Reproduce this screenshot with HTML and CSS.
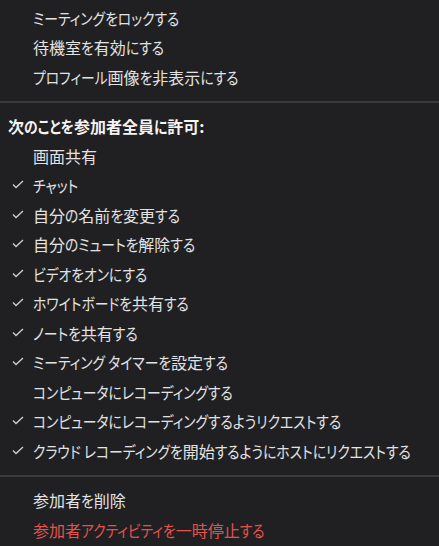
FILE: index.html
```html
<!DOCTYPE html>
<html lang="ja">
<head>
  <meta charset="UTF-8" />
  <title>セキュリティ</title>
  <link rel="stylesheet" href="styles.css">
</head>
<body>
  <div class="menu">
    <div class="group">
      <div class="item"><span class="k">ミーティングをロックする</span></div>
      <div class="item">待機室<span class="k">を</span>有効<span class="k">にする</span></div>
      <div class="item"><span class="k">プロフィール</span>画像<span class="k">を</span>非表示<span class="k">にする</span></div>
    </div>
    <div class="sep"></div>
    <div class="group">
      <div class="heading">次<span class="k">のことを</span>参加者全員<span class="k">に</span>許可:</div>
      <div class="item">画面共有</div>
      <div class="item checked"><span class="k">チャット</span></div>
      <div class="item checked">自分<span class="k">の</span>名前<span class="k">を</span>変更<span class="k">する</span></div>
      <div class="item checked">自分<span class="k">のミュートを</span>解除<span class="k">する</span></div>
      <div class="item checked"><span class="k">ビデオをオンにする</span></div>
      <div class="item checked"><span class="k">ホワイトボードを</span>共有<span class="k">する</span></div>
      <div class="item checked"><span class="k">ノートを</span>共有<span class="k">する</span></div>
      <div class="item checked"><span class="k">ミーティング タイマーを</span>設定<span class="k">する</span></div>
      <div class="item"><span class="k">コンピュータにレコーディングする</span></div>
      <div class="item checked"><span class="k">コンピュータにレコーディングするようリクエストする</span></div>
      <div class="item checked"><span class="k">クラウド レコーディングを</span>開始<span class="k">するようにホストにリクエストする</span></div>
    </div>
    <div class="sep"></div>
    <div class="group">
      <div class="item">参加者<span class="k">を</span>削除</div>
      <div class="item danger">参加者<span class="k">アクティビティを</span>一時停止<span class="k">する</span></div>
    </div>
  </div>
</body>
</html>
```

FILE: styles.css
```css
:root {
  --bg: #202023;
  --text: #e3e3e3;
  --line: #3a3a3d;
  --red: #e5524c;
}

html, body {
  margin: 0;
  background: var(--bg);
}

body {
  font-family: "Noto Sans CJK JP", "Noto Sans", sans-serif;
  font-feature-settings: "palt";
  font-size: 16px;
  color: var(--text);
}

.menu {
  padding-top: 3px;
}

.item,
.heading {
  height: 29.5px;
  display: flex;
  align-items: center;
  padding-left: 33px;
  position: relative;
  white-space: nowrap;
}

/* kana are narrow in the original UI font */
.k {
  display: inline-block;
  font-size: 13.8px;
  line-height: 16px;
  transform: scaleY(1.16);
  transform-origin: 50% 55%;
}

.heading {
  padding-left: 8px;
  font-weight: bold;
  color: #f4f4f4;
}

.item.checked::before {
  content: "";
  position: absolute;
  left: 12px;
  top: 50%;
  width: 12px;
  height: 9px;
  margin-top: -5px;
  background: url("data:image/svg+xml,%3Csvg xmlns='http://www.w3.org/2000/svg' width='12' height='9' viewBox='0 0 12 9'%3E%3Cpolyline points='1,4.5 4,7.5 11,1' fill='none' stroke='%23d0d0d0' stroke-width='1.3'/%3E%3C/svg%3E") no-repeat;
}

.danger {
  color: var(--red);
}

.sep {
  height: 2px;
  background: var(--line);
  margin: 9px 0;
}
```
